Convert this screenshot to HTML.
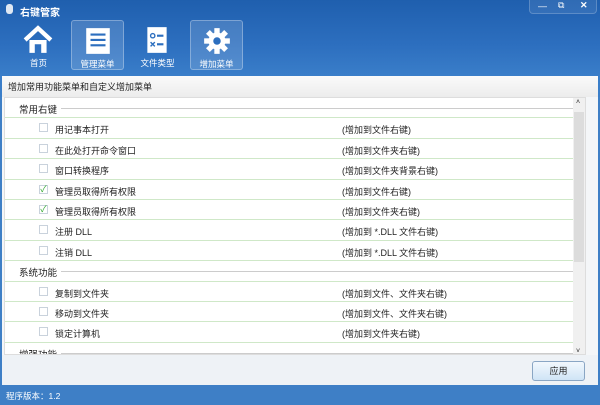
<!DOCTYPE html>
<html><head><meta charset="utf-8"><style>
*{margin:0;padding:0;box-sizing:border-box}
body{width:600px;height:405px;overflow:hidden;font-family:"Liberation Sans","Noto Sans CJK SC",sans-serif;font-size:9px;color:#222;background:#3e7fc6;position:relative}
.top{position:absolute;left:0;top:0;width:600px;height:76px;background:linear-gradient(180deg,#1f5fae 0%,#2d6fbf 60%,#3a7ec9 100%)}
.title{position:absolute;left:20px;top:4px;color:#fff;font-size:10px;font-weight:bold}
.logo{position:absolute;left:6px;top:4px;width:7px;height:10px;border-radius:3px;background:#dfe8f3}
.wb{position:absolute;top:0;right:3px;width:68px;height:14px;border:1px solid rgba(255,255,255,.2);border-top:none;border-radius:0 0 4px 4px;background:rgba(255,255,255,.08);color:#fff;font-size:9px}
.tb{position:absolute;top:20px;width:53px;height:50px;color:#fff;text-align:center;font-size:8.5px}
.tb.sel{background:rgba(255,255,255,.15);border:1px solid rgba(255,255,255,.3);border-radius:3px}
.tb .lb{position:absolute;left:0;right:0;top:37px}
.tb svg{position:absolute;left:11px;top:5px}
.sub{position:absolute;left:0;top:76px;width:600px;height:21px;background:linear-gradient(#fafafa,#ececec);font-size:9px;padding:4px 6px;border-left:2px solid #3a7ec9;border-right:2px solid #3a7ec9}
.content{position:absolute;left:2px;top:97px;width:596px;height:258px;background:#f4f6f8}
.list{position:absolute;left:2px;top:0;width:582px;height:258px;background:#fff;overflow:hidden;border:1px solid #ddd}
.row{height:20.4px;border-bottom:1px solid #cfe8c8;position:relative;font-size:9px}
.row .cb{position:absolute;left:34px;top:5px;width:9px;height:9px;border:1px solid #c9d2dc;background:#fff;color:#3a3;font-size:9px;line-height:7px;text-align:center}
.row .t{position:absolute;left:50px;top:5px}
.row .r{position:absolute;left:337px;top:5px}
.hd{height:20.4px;border-bottom:1px solid #cfe8c8;position:relative;font-size:9.5px}
.hd span{position:absolute;left:14px;top:4px;background:#fff;padding-right:4px;z-index:1}
.hd:after{content:"";position:absolute;left:14px;right:6px;top:10px;border-top:1px solid #ccc}
.sb{position:absolute;right:0;top:0;width:12px;height:258px;background:#f0f0f0}
.thumb{position:absolute;left:1px;top:14px;width:10px;height:150px;background:#dcdcdc}
.btn{position:absolute;left:532px;top:361px;width:53px;height:20px;border:1px solid #8aa6c4;border-radius:3px;background:linear-gradient(#f2f8fd,#cfe4f6);text-align:center;line-height:18px;font-size:9px}
.foot{position:absolute;left:2px;top:355px;width:596px;height:30px;background:#eef2f6}
.status{position:absolute;left:6px;top:390px;color:#fff;font-size:8.5px}
</style></head><body>
<div class="top">
<div class="logo"></div><div class="title">右键管家</div>
<div class="wb"><span style="position:absolute;left:8px;top:1px">—</span><span style="position:absolute;left:28px;top:0px">⧉</span><span style="position:absolute;left:50px;top:0px;font-weight:bold">✕</span></div>
<div class="tb" style="left:12px"><svg width="30" height="30" viewBox="0 0 28 28"><path d="M2 14 L14 3 L26 14" fill="none" stroke="#fff" stroke-width="4"/><path d="M6 14 V26 H11 V18 H17 V26 H22 V14" fill="#fff"/></svg><div class="lb">首页</div></div>
<div class="tb sel" style="left:71px"><svg width="30" height="30" viewBox="0 0 28 28"><rect x="3" y="2" width="22" height="24" fill="#fff"/><rect x="7" y="7" width="14" height="2" fill="#2d6fbf"/><rect x="7" y="12" width="14" height="2" fill="#2d6fbf"/><rect x="7" y="17" width="14" height="2" fill="#2d6fbf"/></svg><div class="lb">管理菜单</div></div>
<div class="tb" style="left:131px"><svg width="30" height="30" viewBox="0 0 28 28"><rect x="5" y="2" width="18" height="24" fill="#fff"/><circle cx="10" cy="10" r="2" fill="none" stroke="#2d6fbf" stroke-width="1.3"/><rect x="14" y="9" width="6" height="2" fill="#2d6fbf"/><path d="M8 16 L12 20 M12 16 L8 20" stroke="#2d6fbf" stroke-width="1.3"/><rect x="14" y="17" width="6" height="2" fill="#2d6fbf"/></svg><div class="lb">文件类型</div></div>
<div class="tb sel" style="left:190px"><svg width="30" height="30" viewBox="0 0 28 28"><g fill="#fff"><circle cx="14" cy="14" r="8"/><rect x="11.5" y="2" width="5" height="24"/><rect x="2" y="11.5" width="24" height="5"/><rect x="11.5" y="2" width="5" height="24" transform="rotate(45 14 14)"/><rect x="11.5" y="2" width="5" height="24" transform="rotate(-45 14 14)"/></g><circle cx="14" cy="14" r="3.5" fill="#2d6fbf"/></svg><div class="lb">增加菜单</div></div>
</div>
<div class="sub">增加常用功能菜单和自定义增加菜单</div>
<div class="content"><div class="list">
<div class="hd"><span>常用右键</span></div>
<div class="row"><div class="cb"></div><div class="t">用记事本打开</div><div class="r">(增加到文件右键)</div></div>
<div class="row"><div class="cb"></div><div class="t">在此处打开命令窗口</div><div class="r">(增加到文件夹右键)</div></div>
<div class="row"><div class="cb"></div><div class="t">窗口转换程序</div><div class="r">(增加到文件夹背景右键)</div></div>
<div class="row"><div class="cb">✓</div><div class="t">管理员取得所有权限</div><div class="r">(增加到文件右键)</div></div>
<div class="row"><div class="cb">✓</div><div class="t">管理员取得所有权限</div><div class="r">(增加到文件夹右键)</div></div>
<div class="row"><div class="cb"></div><div class="t">注册 DLL</div><div class="r">(增加到 *.DLL 文件右键)</div></div>
<div class="row"><div class="cb"></div><div class="t">注销 DLL</div><div class="r">(增加到 *.DLL 文件右键)</div></div>
<div class="hd"><span>系统功能</span></div>
<div class="row"><div class="cb"></div><div class="t">复制到文件夹</div><div class="r">(增加到文件、文件夹右键)</div></div>
<div class="row"><div class="cb"></div><div class="t">移动到文件夹</div><div class="r">(增加到文件、文件夹右键)</div></div>
<div class="row"><div class="cb"></div><div class="t">锁定计算机</div><div class="r">(增加到文件夹右键)</div></div>
<div class="hd"><span>增强功能</span></div>
<div class="sb"><div class="thumb"></div><span style="position:absolute;left:3px;top:1px;font-size:7px">˄</span><span style="position:absolute;left:3px;bottom:1px;font-size:7px">˅</span></div>
</div></div>
<div class="foot"></div>
<div class="btn">应用</div>
<div class="status">程序版本：1.2</div>
</body></html>
